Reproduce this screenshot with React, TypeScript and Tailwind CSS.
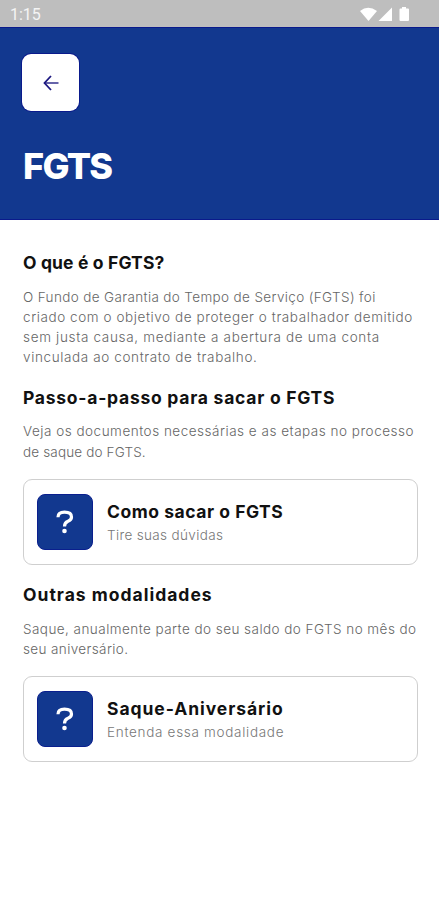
import type { ReactNode } from 'react';

interface Line {
  text: string;
  tracking?: string;
}

interface TopicProps {
  title: Line;
  lines: Line[];
  children?: ReactNode;
}

interface OptionCardProps {
  title: Line;
  subtitle: Line;
}

function StatusBar() {
  return (
    <div className="flex h-[27px] items-center justify-between bg-[#bebebe] pl-[10px] pr-[29px] pt-[2px] text-white">
      <span className="font-[Roboto,sans-serif] text-[16px] leading-none text-[#f4f4f4]">1:15</span>
      <svg width="50" height="15" viewBox="0 0 50 15" fill="currentColor">
        <path d="M0 4Q8-2.4 17 4L8.500 14Z" />
        <path d="M32 0.500V14H18.500Z" />
        <path d="M42 0h4v1.500h2q1 0 1 1V13q0 1-1 1h-7.500q-1 0-1-1V2.500q0-1 1-1H42Z" />
      </svg>
    </div>
  );
}

function OptionCard({ title, subtitle }: OptionCardProps) {
  return (
    <button className="mt-[17px] flex h-[86px] w-[395px] items-center rounded-[9px] border border-[#cfcfcf] pl-[13px] text-left">
      <span className="flex size-[56px] items-center justify-center rounded-[8px] border border-[#0a1f8e] bg-[#12388f]">
        <svg width="18" height="24" viewBox="0 0 18 24" fill="none" stroke="white" strokeWidth="3.2">
          <path d="M2 7.200Q2 2.200 8.500 2.200Q15.500 2.200 15.500 7Q15.500 10 12 11.200Q8.500 12.500 8.500 16.500" />
          <circle cx="8.500" cy="21" r="2.300" fill="white" stroke="none" />
        </svg>
      </span>
      <span className="ml-[14px] flex flex-col pt-[2px]">
        <span className={`whitespace-nowrap text-[17.5px] font-bold leading-[24px] text-[#111] ${title.tracking ?? ''}`}>
          {title.text}
        </span>
        <span className={`whitespace-nowrap text-[13.5px] font-light leading-[22px] text-[#777] ${subtitle.tracking ?? ''}`}>
          {subtitle.text}
        </span>
      </span>
    </button>
  );
}

function Topic({ title, lines, children }: TopicProps) {
  return (
    <section>
      <h2 className={`whitespace-nowrap text-[17.5px] font-bold leading-[26px] text-[#111] ${title.tracking ?? ''}`}>
        {title.text}
      </h2>
      <p className="mt-[10.5px] whitespace-nowrap text-[13.5px] font-light leading-[20.2px] text-[#666]">
        {lines.map((line) => (
          <span key={line.text} className="block">
            <span className={line.tracking}>{line.text}</span>
          </span>
        ))}
      </p>
      {children}
    </section>
  );
}

export default function App() {
  return (
    <div className="h-[900px] w-[439px] overflow-hidden bg-white font-[Inter,sans-serif]">
      <StatusBar />
      <header className="h-[193px] border-y border-[#0a1a8c] bg-[#12388f] pl-[22px] pt-[26px]">
        <button
          aria-label="Voltar"
          className="flex size-[57px] items-center justify-center rounded-[9px] bg-white ring-1 ring-[#0a1a8c]"
        >
          <svg width="16" height="16" viewBox="0 0 16 16" fill="none" stroke="#1c1880">
            <path d="M8 1L1.500 8L8 15" strokeWidth="1.800" />
            <path d="M1.500 8H15.500" strokeWidth="1.800" strokeOpacity="0.75" />
          </svg>
        </button>
        <h1 className="ml-px mt-[32px] text-[36px] font-extrabold leading-[46px] tracking-[-1.7px] text-white">FGTS</h1>
      </header>

      <main className="flex flex-col gap-[17.5px] pl-[23px] pt-[30px]">
        <Topic
          title={{ text: 'O que é o FGTS?', tracking: 'tracking-[0.14px]' }}
          lines={[
            { text: 'O Fundo de Garantia do Tempo de Serviço (FGTS) foi', tracking: 'tracking-[0.36px]' },
            { text: 'criado com o objetivo de proteger o trabalhador demitido', tracking: 'tracking-[0.58px]' },
            { text: 'sem justa causa, mediante a abertura de uma conta', tracking: 'tracking-[0.67px]' },
            { text: 'vinculada ao contrato de trabalho.', tracking: 'tracking-[0.62px]' },
          ]}
        />
        <Topic
          title={{ text: 'Passo-a-passo para sacar o FGTS', tracking: 'tracking-[0.74px]' }}
          lines={[
            { text: 'Veja os documentos necessárias e as etapas no processo', tracking: 'tracking-[0.51px]' },
            { text: 'de saque do FGTS.', tracking: 'tracking-[0.15px]' },
          ]}
        >
          <OptionCard
            title={{ text: 'Como sacar o FGTS', tracking: 'tracking-[0.53px]' }}
            subtitle={{ text: 'Tire suas dúvidas', tracking: 'tracking-[0.35px]' }}
          />
        </Topic>
        <Topic
          title={{ text: 'Outras modalidades', tracking: 'tracking-[1px]' }}
          lines={[
            { text: 'Saque, anualmente parte do seu saldo do FGTS no mês do', tracking: 'tracking-[0.45px]' },
            { text: 'seu aniversário.', tracking: 'tracking-[0.38px]' },
          ]}
        >
          <OptionCard
            title={{ text: 'Saque-Aniversário', tracking: 'tracking-[0.94px]' }}
            subtitle={{ text: 'Entenda essa modalidade', tracking: 'tracking-[0.7px]' }}
          />
        </Topic>
      </main>
    </div>
  );
}
